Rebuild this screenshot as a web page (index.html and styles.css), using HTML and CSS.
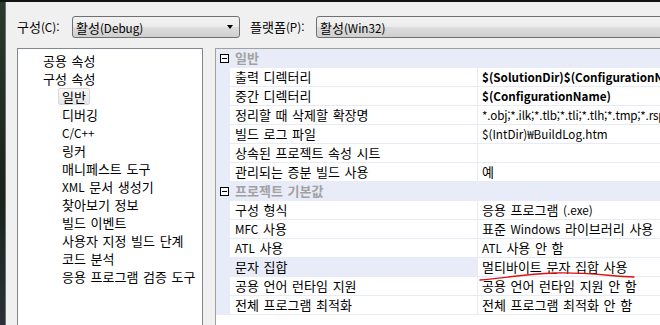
FILE: index.html
```html
<!DOCTYPE html>
<html lang="ko">
<head>
<meta charset="utf-8">
<link rel="stylesheet" href="styles.css">
</head>
<body>
<div class="topedge"></div>
<div class="frame">
  <div class="leftedge"></div>
  <div class="window">
    <div class="toolbar">
      <span class="lbl lbl1">구성<span class="en">(C):</span></span>
      <div class="combo combo1"><span>활성<span class="en">(Debug)</span></span><span class="arrow"></span></div>
      <span class="lbl lbl2">플랫폼<span class="en">(P):</span></span>
      <div class="combo combo2"><span>활성<span class="en">(Win32)</span></span></div>
    </div>
    <div class="main">
      <div class="tree">
        <div class="ti l1">공용 속성</div>
        <div class="ti l1">구성 속성</div>
        <div class="ti l2"><span class="sel">일반</span></div>
        <div class="ti l2">디버깅</div>
        <div class="ti l2"><span class="en">C/C++</span></div>
        <div class="ti l2">링커</div>
        <div class="ti l2">매니페스트 도구</div>
        <div class="ti l2"><span class="en">XML</span> 문서 생성기</div>
        <div class="ti l2">찾아보기 정보</div>
        <div class="ti l2">빌드 이벤트</div>
        <div class="ti l2">사용자 지정 빌드 단계</div>
        <div class="ti l2">코드 분석</div>
        <div class="ti l2">응용 프로그램 검증 도구</div>
      </div>
      <div class="grid">
        <div class="cat"><span class="gut"><span class="exp"></span></span><span class="catname">일반</span></div>
        <div class="row"><span class="gut"></span><span class="name">출력 디렉터리</span><span class="val b en">$(SolutionDir)$(ConfigurationName)</span></div>
        <div class="row"><span class="gut"></span><span class="name">중간 디렉터리</span><span class="val b en">$(ConfigurationName)</span></div>
        <div class="row"><span class="gut"></span><span class="name">정리할 때 삭제할 확장명</span><span class="val en tight">*.obj;*.ilk;*.tlb;*.tli;*.tlh;*.tmp;*.rsp;*.pgc;*.pgd</span></div>
        <div class="row"><span class="gut"></span><span class="name">빌드 로그 파일</span><span class="val en">$(IntDir)₩BuildLog.htm</span></div>
        <div class="row"><span class="gut"></span><span class="name">상속된 프로젝트 속성 시트</span><span class="val"></span></div>
        <div class="row"><span class="gut"></span><span class="name">관리되는 증분 빌드 사용</span><span class="val">예</span></div>
        <div class="cat"><span class="gut"><span class="exp"></span></span><span class="catname">프로젝트 기본값</span></div>
        <div class="row"><span class="gut"></span><span class="name">구성 형식</span><span class="val">응용 프로그램 <span class="en">(.exe)</span></span></div>
        <div class="row"><span class="gut"></span><span class="name"><span class="en">MFC</span> 사용</span><span class="val">표준 <span class="en">Windows</span> 라이브러리 사용</span></div>
        <div class="row"><span class="gut"></span><span class="name"><span class="en">ATL</span> 사용</span><span class="val"><span class="en">ATL</span> 사용 안 함</span></div>
        <div class="row"><span class="gut"></span><span class="name hl">문자 집합</span><span class="val">멀티바이트 문자 집합 사용</span></div>
        <div class="row"><span class="gut"></span><span class="name">공용 언어 런타임 지원</span><span class="val">공용 언어 런타임 지원 안 함</span></div>
        <div class="row"><span class="gut"></span><span class="name">전체 프로그램 최적화</span><span class="val">전체 프로그램 최적화 안 함</span></div>
      </div>
    </div>
  </div>
</div>
<svg class="mark" width="660" height="325" viewBox="0 0 660 325">
  <path d="M480 280 C 505 278, 525 274, 555 273 S 610 276, 634 277" fill="none" stroke="#e01010" stroke-width="1.4" stroke-linecap="round"/>
</svg>
</body>
</html>
```
FILE: styles.css
```css
html, body {
  margin: 0;
  padding: 0;
  width: 660px;
  height: 325px;
  overflow: hidden;
  background: #1c211d;
  font-family: "Noto Sans CJK KR", "Noto Sans", sans-serif;
  font-size: 13px;
  word-spacing: 1px;
  color: #000;
}
.en {
  font-size: 11.7px;
}
.tight {
  letter-spacing: -0.2px;
}
.topedge {
  height: 2px;
  background: #141414;
}
.frame {
  display: flex;
  height: 323px;
}
.leftedge {
  width: 5px;
  background: linear-gradient(#2a3a2c, #1a221b 60%, #2c3036);
  border-right: 1px solid #6b7070;
}
.window {
  flex: 1;
  background: #f0f0f0;
  padding: 14px 0 0 11px;
  overflow: hidden;
}
.toolbar {
  display: flex;
  align-items: center;
  height: 22px;
}
.lbl {
  line-height: 22px;
}
.lbl1 { width: 55px; }
.lbl2 { width: 66px; margin-left: 10px; }
.combo {
  box-sizing: border-box;
  height: 22px;
  border: 1px solid #707070;
  border-radius: 3px;
  background: linear-gradient(#f2f2f2 0%, #ebebeb 50%, #dddddd 50%, #cfcfcf 100%);
  display: flex;
  align-items: center;
  justify-content: space-between;
  padding: 0 6px 0 3px;
}
.combo1 { width: 168px; }
.combo2 { flex: 1; margin-right: -10px; }
.arrow {
  width: 0;
  height: 0;
  border-left: 3.5px solid transparent;
  border-right: 3.5px solid transparent;
  border-top: 4px solid #000;
}
.main {
  display: flex;
  margin-top: 10px;
  height: 300px;
}
.tree {
  box-sizing: border-box;
  width: 186px;
  border: 1px solid #828790;
  background: #fff;
  padding-top: 3px;
}
.ti {
  height: 18px;
  line-height: 18px;
  white-space: nowrap;
}
.l1 { padding-left: 25px; }
.l2 { padding-left: 44px; }
.sel {
  display: inline-block;
  height: 15px;
  line-height: 15px;
  margin-left: -4px;
  padding: 0 3px;
  border: 1px solid #d9d9d9;
  border-radius: 2px;
  background: linear-gradient(#f8f8f8, #e6e6e6);
}
.grid {
  flex: 1;
  margin-left: 12px;
  border-top: 1px solid #a0a0a0;
  border-left: 1px solid #a0a0a0;
  background: #fff;
  overflow: hidden;
}
.cat, .row {
  display: flex;
  box-sizing: border-box;
  height: 19px;
  line-height: 18px;
  white-space: nowrap;
}
.cat {
  background: #e8ebf8;
}
.gut {
  width: 14px;
  flex: none;
  background: #e8ebf8;
  display: flex;
  align-items: center;
  justify-content: center;
}
.exp {
  box-sizing: border-box;
  width: 9px;
  height: 9px;
  border: 1px solid #000;
  background: #fff;
  position: relative;
  margin-left: 3px;
}
.exp::after {
  content: "";
  position: absolute;
  left: 1px;
  right: 1px;
  top: 3px;
  height: 1px;
  background: #000;
}
.catname {
  padding-left: 5px;
  color: #a2a2a2;
  font-weight: bold;
}
.name {
  box-sizing: border-box;
  width: 248px;
  flex: none;
  padding-left: 5px;
  border-bottom: 1px solid #e8ebf5;
  border-right: 1px solid #e8ebf5;
  overflow: hidden;
}
.name.hl {
  background: #e8ebf8;
}
.val {
  flex: 1;
  padding-left: 4px;
  border-bottom: 1px solid #e8ebf5;
  overflow: hidden;
}
.b { font-weight: bold; }
.mark {
  position: absolute;
  left: 0;
  top: 0;
  pointer-events: none;
}
```
